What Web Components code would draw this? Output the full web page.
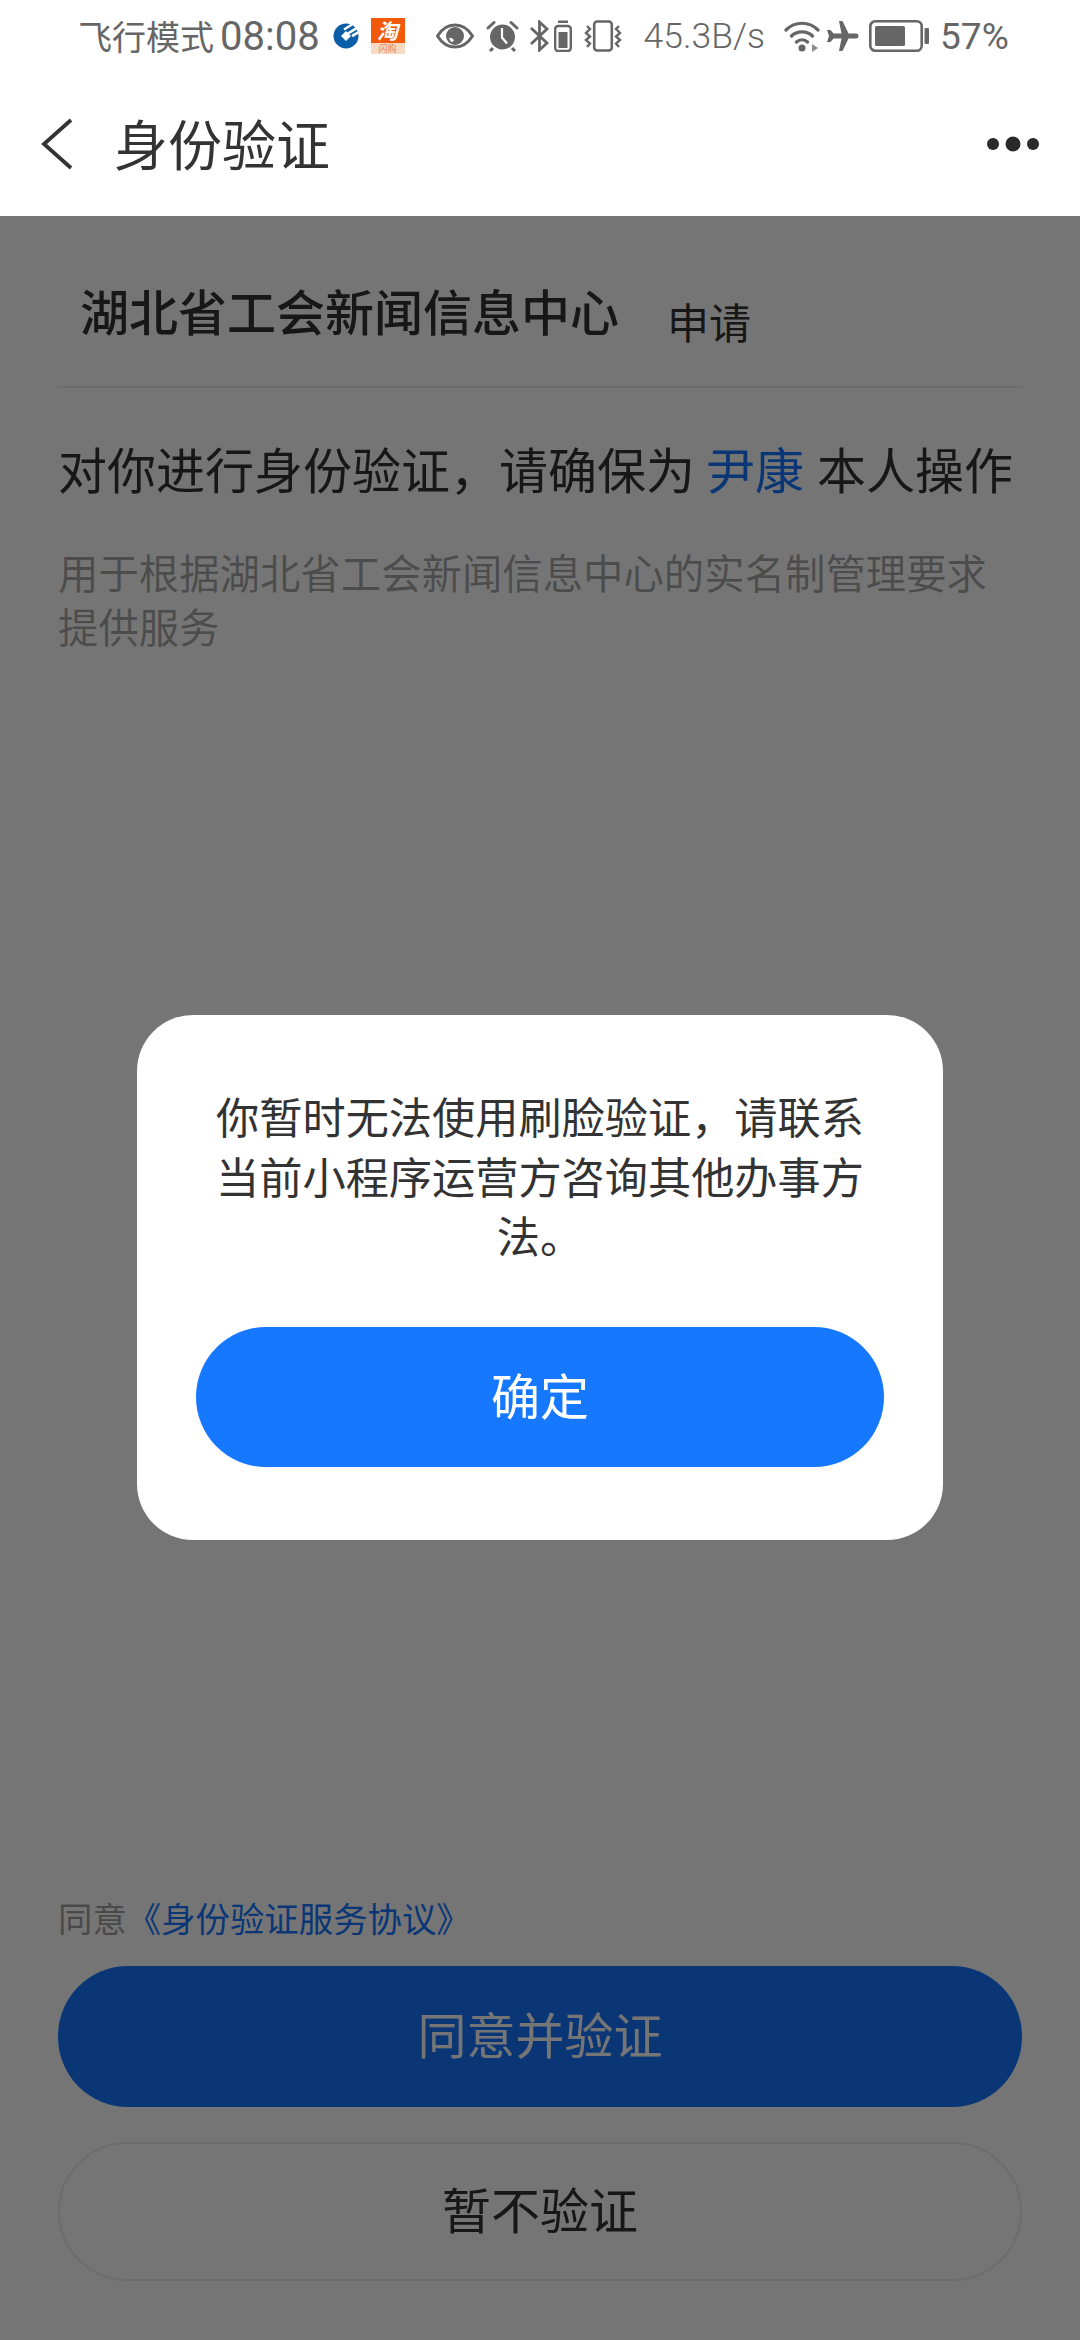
<!DOCTYPE html>
<html lang="zh-CN">
<head>
<meta charset="utf-8">
<title>身份验证</title>
<style>
html,body{margin:0;padding:0;background:#fff}
body{width:1080px;height:2340px;overflow:hidden;font-family:"Noto Sans CJK SC","Noto Sans",sans-serif}
</style>
</head>
<body>
<verify-app>
  <status-bar slot="top"></status-bar>
  <nav-bar slot="top" title="身份验证"></nav-bar>
  <verify-page></verify-page>
  <modal-dialog slot="overlay" action="确定">你暂时无法使用刷脸验证，请联系当前小程序运营方咨询其他办事方法。</modal-dialog>
</verify-app>
<script>
function def(name, html){
  customElements.define(name, class extends HTMLElement{
    constructor(){super();this.attachShadow({mode:'open'}).innerHTML=typeof html==='function'?html(this):html;}
  });
}
def('verify-app',`<style>
:host{display:flex;flex-direction:column;width:1080px;height:2340px;position:relative;background:#fff}
.top{position:relative;z-index:2;background:#fff;flex:none}
.body{flex:1;position:relative;display:flex;min-height:0}
.scrim{position:absolute;inset:0;background:rgba(0,0,0,.54);display:flex;flex-direction:column;align-items:center;padding-top:799px;box-sizing:border-box}
::slotted(verify-page){flex:1}
</style>
<div class="top"><slot name="top"></slot></div>
<div class="body"><slot></slot><div class="scrim"><slot name="overlay"></slot></div></div>`);

const G='#666';
def('status-bar',`<style>
:host{display:flex;align-items:center;height:72px;padding-left:78px;color:${G};box-sizing:border-box;font-family:"Noto Sans CJK SC",sans-serif}
.mode{font-size:34px;line-height:72px;white-space:nowrap;flex:none}
.num{font-family:Roboto,sans-serif;white-space:nowrap;flex:none}
.time{font-size:40px;margin-left:6px;font-weight:400}
.speed{font-size:35.500px;margin-left:22px;font-weight:300;font-family:Roboto,sans-serif;white-space:nowrap;flex:none}
.pct{font-size:37px;margin-left:11px;font-weight:400;white-space:nowrap;font-family:Roboto,sans-serif;flex:none}
svg{display:block;flex:none}
.tb{flex:none;width:34px;height:36px;margin-left:12px;background:linear-gradient(#f2590a 0 70%,#f7d9c4 70% 100%);display:flex;flex-direction:column;align-items:center;margin-top:-1px}
.tb b{font:italic 700 21px/24px "Noto Sans CJK SC",sans-serif;color:#fff;height:25px}
.tb i{font:normal 9px/11px "Noto Sans CJK SC",sans-serif;color:#e58454}
</style>
<span class="mode">飞行模式</span><span class="num time">08:08</span>
<svg style="margin-left:13px" width="26" height="26" viewBox="0 0 26 26"><circle cx="13" cy="13" r="12.500" fill="#0b5ea8"/><path d="M13 8 18 13 13 18 8 13Z" fill="#fff"/><path d="M15 10.500 27 3M19 13 28 8" stroke="#fff" stroke-width="2.600" fill="none"/><path d="M11 6.500 19 1.500" stroke="#fff" stroke-width="2.200" fill="none"/></svg>
<div class="tb"><b>淘</b><i>闪购</i></div>
<svg style="margin-left:31px" width="38" height="26" viewBox="0 0 38 26"><path d="M1.500 13C7 4 13 2 19 2s12 2 17.500 11C31 22 25 24 19 24S7 22 1.500 13Z" fill="none" stroke="${G}" stroke-width="3"/><circle cx="19" cy="13" r="9" fill="${G}"/><path d="M13 15a4 4 0 0 1 5 3l-3 1Z" fill="#fff"/></svg>
<svg style="margin-left:12px" width="33" height="32" viewBox="0 0 33 32"><circle cx="16.500" cy="17" r="12.500" fill="${G}"/><path d="M16 8v9.500l5 6" stroke="#fff" stroke-width="2.200" fill="none"/><path d="M2 8 8 2.500M31 8 25 2.500" stroke="${G}" stroke-width="3" stroke-linecap="round"/><path d="M7 28 4 31M26 28l3 3" stroke="${G}" stroke-width="3"/></svg>
<svg style="margin-left:11px" width="20" height="32" viewBox="0 0 20 32"><path d="M1 8 17 23 9.500 30V2L17 9 1 24" fill="none" stroke="${G}" stroke-width="2.800"/></svg>
<svg style="margin-left:4px" width="18" height="32" viewBox="0 0 18 32"><rect x="4" y="0.500" width="10" height="2.500" fill="${G}"/><rect x="1.200" y="6" width="15.600" height="25" rx="3" fill="none" stroke="${G}" stroke-width="2.400"/><rect x="4.500" y="12" width="9" height="16" fill="${G}"/></svg>
<svg style="margin-left:12px" width="38" height="32" viewBox="0 0 38 32"><rect x="10.200" y="1.500" width="17.600" height="29" rx="3" fill="none" stroke="${G}" stroke-width="2.600"/><path d="M3 6 6 9 2 13 6 16.500 2 20 6 23.500 3 27M35 6 32 9 36 13 32 16.500 36 20 32 23.500 35 27" fill="none" stroke="${G}" stroke-width="2.400"/></svg>
<span class="speed">45.3B/s</span>
<svg style="margin-left:19px" width="36" height="33" viewBox="0 0 36 33"><path d="M2 10C11 1 25 1 34 10M7.500 16C13 10.500 23 10.500 28.500 16M12.500 22C15.500 19 20.500 19 23.500 22" fill="none" stroke="${G}" stroke-width="3.200" stroke-linecap="round"/><circle cx="18" cy="28" r="3.500" fill="${G}"/><path d="M28 24v8l6-4Z" fill="${G}" opacity=".75"/></svg>
<svg style="margin-left:6px" width="33" height="32" viewBox="0 0 33 32"><path d="M13 1h3.500l6 12.500H30a2.500 2.500 0 0 1 0 5h-7.500L16.500 31H13l2.500-12.500H7.500L4.500 22H1l2-6-2-6h3.500l3 3.500h8Z" fill="${G}"/></svg>
<svg style="margin-left:10px" width="60" height="32" viewBox="0 0 60 32"><rect x="1.300" y="1.300" width="51.400" height="29.400" rx="5" fill="none" stroke="${G}" stroke-width="2.600"/><rect x="6" y="6" width="30" height="20" rx="1.500" fill="${G}"/><rect x="55.500" y="8" width="4.500" height="16" rx="1" fill="${G}"/></svg>
<span class="pct">57%</span>`);

def('nav-bar',t=>`<style>
:host{display:flex;align-items:center;height:144px;position:relative;box-sizing:border-box;padding-left:41px;color:#333}
svg{display:block;flex:none}
h1{font:400 54px/72px "Noto Sans CJK SC",sans-serif;margin:-3px 0 0 41px;color:#333}
.more{margin-left:auto;margin-right:40px}
</style>
<svg width="32" height="52" viewBox="0 0 32 52"><path d="M30 2 3 26 30 50" fill="none" stroke="#333" stroke-width="3.800"/></svg>
<h1>${t.getAttribute('title')}</h1>
<svg class="more" width="54" height="16" viewBox="0 0 54 16"><circle cx="7" cy="8" r="6" fill="#2a2a2a"/><circle cx="27" cy="8" r="7.500" fill="#2a2a2a"/><circle cx="47" cy="8" r="6" fill="#2a2a2a"/></svg>`);

def('app-button',`<style>
:host{display:flex;align-items:center;justify-content:center;box-sizing:border-box;border-radius:70px;font:400 49px/1 "Noto Sans CJK SC",sans-serif;width:100%;height:141px;padding-bottom:8px}
:host([kind=primary]){background:#1677ff;color:#fff}
:host([kind=ghost]){border:2px solid rgba(0,0,0,.08);color:#333;height:139px}
:host([kind=dim]){background:#1677ff;color:#fff}
</style><slot></slot>`);

def('verify-page',`<style>
:host{display:flex;flex-direction:column;background:#fff;box-sizing:border-box;padding:0 58px;height:100%}
.org{display:flex;align-items:flex-start;height:172px;border-bottom:2px solid rgba(0,0,0,.08);padding-left:22px;color:#333;box-sizing:border-box;flex:none}
.org b{font:500 49px/64px "Noto Sans CJK SC",sans-serif;margin-top:62px;white-space:nowrap}
.org span{font:400 42px/56px "Noto Sans CJK SC",sans-serif;margin:77px 0 0 48px;white-space:nowrap}
.who{font:400 49px/66px "Noto Sans CJK SC",sans-serif;color:#333;margin:47px 0 0;white-space:nowrap}
.who em{font-style:normal;color:#1677ff;margin:0 13px 0 11px}
.sub{font:400 40.400px/54px "Noto Sans CJK SC",sans-serif;color:rgba(0,0,0,.35);margin:44px 0 0}
.foot{margin-top:auto;padding-bottom:59px;display:flex;flex-direction:column}
.agree{font:400 34.400px/48px "Noto Sans CJK SC",sans-serif;color:rgba(0,0,0,.4);margin-bottom:25px}
.agree a{color:#1677ff;text-decoration:none}
app-button+app-button{margin-top:35px}
</style>
<div class="org"><b>湖北省工会新闻信息中心</b><span>申请</span></div>
<p class="who">对你进行身份验证，请确保为<em>尹康</em>本人操作</p>
<p class="sub">用于根据湖北省工会新闻信息中心的实名制管理要求<br>提供服务</p>
<div class="foot">
<div class="agree">同意<a>《身份验证服务协议》</a></div>
<app-button kind="dim">同意并验证</app-button>
<app-button kind="ghost">暂不验证</app-button>
</div>`);

def('modal-dialog',t=>`<style>
:host{display:flex;flex-direction:column;align-items:center;width:806px;height:525px;box-sizing:border-box;background:#fff;border-radius:56px;padding:71px 59px 0;color:#333}
.msg{font:400 43.200px/59.500px "Noto Sans CJK SC",sans-serif;text-align:center;width:650px;height:241px;flex:none}
app-button{height:140px}
</style>
<div class="msg"><slot></slot></div>
<app-button kind="primary">${t.getAttribute('action')}</app-button>`);
</script>
</body>
</html>
